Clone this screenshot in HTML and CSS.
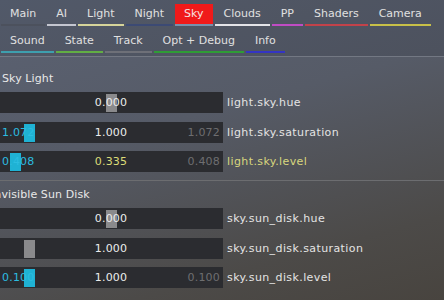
FILE: index.html
```html
<!DOCTYPE html>
<html>
<head>
<meta charset="utf-8">
<link rel="stylesheet" href="styles.css">
</head>
<body>
<div class="app">
  <div class="tabbar">
    <div class="tabrow">
      <div class="tab u-main">Main</div>
      <div class="tab u-ai">AI</div>
      <div class="tab u-light">Light</div>
      <div class="tab u-night">Night</div>
      <div class="tab u-sky active">Sky</div>
      <div class="tab u-clouds">Clouds</div>
      <div class="tab u-pp">PP</div>
      <div class="tab u-shaders">Shaders</div>
      <div class="tab u-camera">Camera</div>
    </div>
    <div class="tabrow">
      <div class="tab u-sound">Sound</div>
      <div class="tab u-state">State</div>
      <div class="tab u-track">Track</div>
      <div class="tab u-opt">Opt + Debug</div>
      <div class="tab u-info">Info</div>
    </div>
  </div>

  <section class="group first">
    <div class="header">Sky Light</div>
    <div class="rows">
      <div class="row">
        <div class="slider">
          <div class="grab neutral" style="left:106px"></div>
          <span class="lval"></span><span class="cval">0.000</span><span class="rval"></span>
        </div>
        <div class="label">light.sky.hue</div>
      </div>
      <div class="row">
        <div class="slider">
          <div class="grab accent" style="left:24px"></div>
          <span class="lval">1.072</span><span class="cval">1.000</span><span class="rval">1.072</span>
        </div>
        <div class="label">light.sky.saturation</div>
      </div>
      <div class="row">
        <div class="slider">
          <div class="grab accent" style="left:10px"></div>
          <span class="lval">0.408</span><span class="cval changed">0.335</span><span class="rval">0.408</span>
        </div>
        <div class="label changed">light.sky.level</div>
      </div>
    </div>
  </section>

  <section class="group second">
    <div class="header clipped">Invisible Sun Disk</div>
    <div class="rows">
      <div class="row">
        <div class="slider">
          <div class="grab neutral" style="left:106px"></div>
          <span class="lval"></span><span class="cval">0.000</span><span class="rval"></span>
        </div>
        <div class="label">sky.sun_disk.hue</div>
      </div>
      <div class="row">
        <div class="slider">
          <div class="grab neutral" style="left:24px"></div>
          <span class="lval"></span><span class="cval">1.000</span><span class="rval"></span>
        </div>
        <div class="label">sky.sun_disk.saturation</div>
      </div>
      <div class="row">
        <div class="slider">
          <div class="grab accent" style="left:24px"></div>
          <span class="lval">0.100</span><span class="cval">1.000</span><span class="rval">0.100</span>
        </div>
        <div class="label">sky.sun_disk.level</div>
      </div>
    </div>
  </section>
</div>
</body>
</html>
```

FILE: styles.css
```css
html, body {
  margin: 0;
  padding: 0;
}
body {
  width: 444px;
  height: 300px;
  overflow: hidden;
  font-family: "DejaVu Sans", Verdana, sans-serif;
  font-size: 11px;
  color: #e2e2e2;
  background: linear-gradient(165deg, #5b6273 0%, #565b67 40%, #4c4a48 80%, #48443f 100%);
}
.app {
  width: 444px;
  height: 300px;
  overflow: hidden;
}
.tabbar {
  padding: 4px 0 3px 1px;
  display: flex;
  flex-direction: column;
  gap: 5px;
  background: rgba(20, 25, 35, 0.12);
  border-bottom: 1px solid #737883;
}
.tabrow {
  display: flex;
  gap: 2px;
}
.tab {
  height: 20px;
  line-height: 20px;
  padding: 0 9px;
  white-space: nowrap;
  color: #e0e0e0;
  border-bottom: 2px solid transparent;
}
.tab.active {
  background: #f01a1a;
  color: #f6e2e2;
}
.u-main { border-bottom-color: #4c515d; }
.u-ai { border-bottom-color: #c4c6d0; }
.u-light { border-bottom-color: #d6d49a; }
.u-night { border-bottom-color: #3c4a74; }
.u-sky { border-bottom-color: #7890ac; }
.u-clouds { border-bottom-color: #e4e4e8; }
.u-pp { border-bottom-color: #c04cc4; }
.u-shaders { border-bottom-color: #c2424a; }
.u-camera { border-bottom-color: #c8c048; }
.u-sound { border-bottom-color: #3e9fae; }
.u-state { border-bottom-color: #62ae44; }
.u-track { border-bottom-color: #6e7078; }
.u-opt { border-bottom-color: #2f9c36; }
.u-info { border-bottom-color: #3434c4; }

.group.first {
  margin-top: 8px;
  padding-bottom: 8px;
}
.group.second {
  border-top: 1px solid #6c6d70;
}
.header {
  padding: 7px 0 7px 2px;
  line-height: 13px;
  color: #e8e8e8;
  white-space: nowrap;
  letter-spacing: 0.1px;
}
.header.clipped {
  text-indent: -11px;
}
.rows {
  display: flex;
  flex-direction: column;
  gap: 8.5px;
}
.row {
  display: flex;
  height: 21px;
}
.slider {
  position: relative;
  width: 223px;
  height: 21px;
  background: #2b2c30;
  display: grid;
  grid-template-columns: 1fr auto 1fr;
  align-items: center;
  padding: 0 3px 0 2px;
  box-sizing: border-box;
  line-height: 22px;
}
.grab {
  position: absolute;
  top: 2px;
  width: 11px;
  height: 18px;
}
.grab.neutral { background: #8a8a8c; }
.grab.accent { background: #1fb2d4; }
.lval, .cval, .rval {
  position: relative;
  letter-spacing: 0.2px;
}
.lval {
  justify-self: start;
  color: #2cbde0;
}
.cval {
  justify-self: center;
  color: #ececec;
}
.rval {
  justify-self: end;
  color: #6e6e70;
}
.changed {
  color: #dcdc78;
}
.label {
  padding-left: 4px;
  line-height: 22px;
  white-space: nowrap;
  color: #e4e4e4;
  letter-spacing: 0.4px;
}
.label.changed {
  color: #d8d67e;
}
```
